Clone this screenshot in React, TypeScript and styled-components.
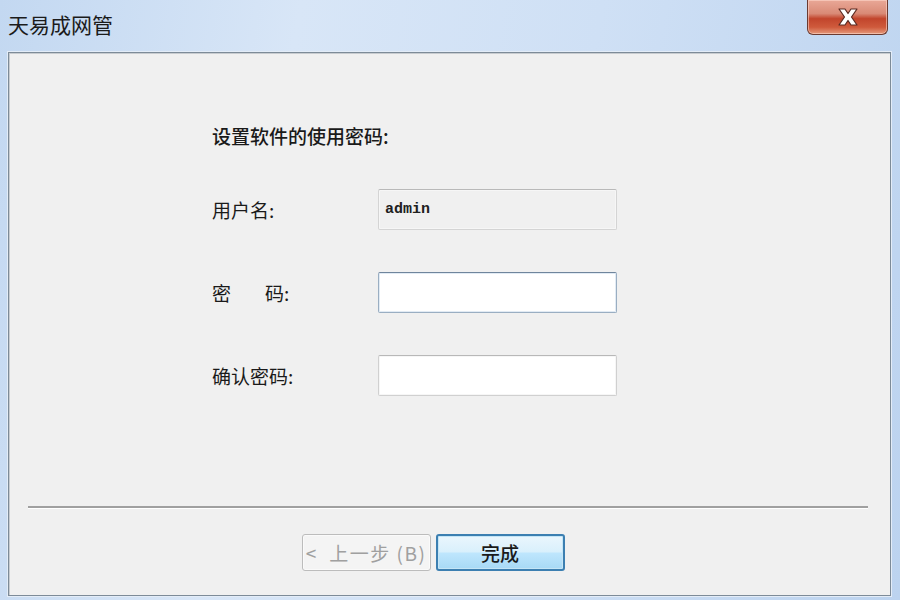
import React from "react";
import styled, { createGlobalStyle } from "styled-components";

const Global = createGlobalStyle`
  html, body { margin: 0; padding: 0; }
  body { width: 900px; height: 600px; overflow: hidden; }
  #root { width: 900px; height: 600px; }
`;

const cjk = `"Noto Sans CJK SC", "Noto Sans", sans-serif`;

const Frame = styled.div`
  width: 900px;
  height: 600px;
  box-sizing: border-box;
  display: flex;
  flex-direction: column;
  background: linear-gradient(100deg, #c3d8f1 0%, #d8e6f7 30%, #cfe0f5 60%, #bcd3ef 100%);
  font-family: ${cjk};
`;

const TitleBar = styled.div`
  height: 52px;
  flex: none;
  display: flex;
  align-items: flex-start;
  justify-content: space-between;
  padding: 0 12px 0 8px;
`;

const Title = styled.div`
  margin-top: 9px;
  font-size: 21px;
  line-height: 30px;
  color: #1b1b1b;
`;

const CloseButton = styled.div`
  width: 81px;
  height: 35px;
  box-sizing: border-box;
  border: 1px solid #6b3a30;
  border-top: none;
  border-radius: 0 0 6px 6px;
  background: linear-gradient(180deg, #e9a897 0%, #d98a76 40%, #c2452c 55%, #cf5a3c 80%, #e59a7c 100%);
  box-shadow: inset 0 0 0 1px rgba(255, 220, 210, 0.55);
  display: flex;
  align-items: center;
  justify-content: center;
`;

const Content = styled.div`
  flex: 1;
  margin: 0 9px 4px 8px;
  background: #f0f0f0;
  border: 1px solid #7d8b98;
  box-shadow: inset 1px 1px 0 #c8ccd0, 0 0 0 1px #e3ecf7;
  display: flex;
  flex-direction: column;
`;

const FormArea = styled.div`
  flex: 1;
  padding: 68px 0 0 203px;
  display: flex;
  flex-direction: column;
`;

const Heading = styled.div`
  font-size: 19px;
  line-height: 30px;
  color: #1a1a1a;
  font-weight: 500;
  margin-bottom: 38px;
`;

const Grid = styled.div`
  display: grid;
  grid-template-columns: 166px 239px;
  grid-auto-rows: 41px;
  row-gap: 42px;
  align-items: center;
`;

const Label = styled.div`
  font-size: 19px;
  color: #1a1a1a;
  line-height: 41px;
  white-space: pre;
`;

const LabelGap = styled.span`
  display: inline-block;
  width: 34px;
`;

const Field = styled.input<{ $variant: "disabled" | "focus" | "normal" }>`
  box-sizing: border-box;
  width: 239px;
  height: 41px;
  margin: 0;
  padding: 0 6px;
  outline: none;
  font-family: "Liberation Mono", "DejaVu Sans Mono", monospace;
  font-size: 15px;
  font-weight: bold;
  color: #202020;
  border-radius: 2px;
  background: ${(p) => (p.$variant === "disabled" ? "#f0f0f0" : "#ffffff")};
  border: 1px solid
    ${(p) =>
      p.$variant === "focus" ? "#9aaec2" : p.$variant === "disabled" ? "#d4d4d4" : "#d0d0d0"};
  border-top-color: ${(p) =>
    p.$variant === "focus" ? "#6f859c" : p.$variant === "disabled" ? "#b9b9b9" : "#b8b8b8"};
  box-shadow: ${(p) =>
    p.$variant === "focus" ? "inset 0 0 0 1px #e2ebf4" : "inset 0 0 0 1px #f6f6f6"};
`;

const Separator = styled.div`
  margin: 0 22px 0 19px;
  height: 2px;
  background: #a0a0a0;
  border-bottom: 1px solid #ffffff;
`;

const ButtonRow = styled.div`
  height: 86px;
  display: flex;
  justify-content: center;
  padding-top: 25px;
  box-sizing: border-box;
  gap: 5px;
  padding-right: 33px;
`;

const Button = styled.button<{ $primary?: boolean }>`
  width: 129px;
  height: 37px;
  box-sizing: border-box;
  font-family: ${cjk};
  font-size: 19px;
  padding: 0;
  border-radius: 3px;
  cursor: default;
  letter-spacing: ${(p) => (p.$primary ? "0" : "1.5px")};
  white-space: pre;
  color: ${(p) => (p.$primary ? "#1a1a1a" : "#a0a0a0")};
  font-weight: ${(p) => (p.$primary ? 500 : 400)};
  border: ${(p) => (p.$primary ? "2px solid #3c7fb1" : "1px solid #bcbcbc")};
  background: ${(p) =>
    p.$primary
      ? "linear-gradient(180deg, #eaf6fd 0%, #d9f0fc 48%, #bee6fd 52%, #a7d9f5 100%)"
      : "#f4f4f4"};
  box-shadow: ${(p) => (p.$primary ? "inset 0 0 0 1px #c4e5f6" : "inset 0 0 0 1px #fafafa")};
`;

function CloseIcon() {
  return (
    <svg width="24" height="20" viewBox="0 0 24 20">
      <path
        d="M3 2 L9 2 L12 6.5 L15 2 L21 2 L15.5 10 L21 18 L15 18 L12 13.5 L9 18 L3 18 L8.5 10 Z"
        fill="#ffffff"
        stroke="#5a2a22"
        strokeWidth="1.2"
        strokeLinejoin="round"
      />
    </svg>
  );
}

export default function App() {
  return (
    <>
      <Global />
      <Frame>
        <TitleBar>
          <Title>天易成网管</Title>
          <CloseButton>
            <CloseIcon />
          </CloseButton>
        </TitleBar>
        <Content>
          <FormArea>
            <Heading>设置软件的使用密码:</Heading>
            <Grid>
              <Label>用户名:</Label>
              <Field $variant="disabled" value="admin" readOnly />
              <Label>
                密<LabelGap />码:
              </Label>
              <Field $variant="focus" type="password" defaultValue="" />
              <Label>确认密码:</Label>
              <Field $variant="normal" type="password" defaultValue="" />
            </Grid>
          </FormArea>
          <Separator />
          <ButtonRow>
            <Button disabled>{"<  上一步 (B)"}</Button>
            <Button $primary>完成</Button>
          </ButtonRow>
        </Content>
      </Frame>
    </>
  );
}
